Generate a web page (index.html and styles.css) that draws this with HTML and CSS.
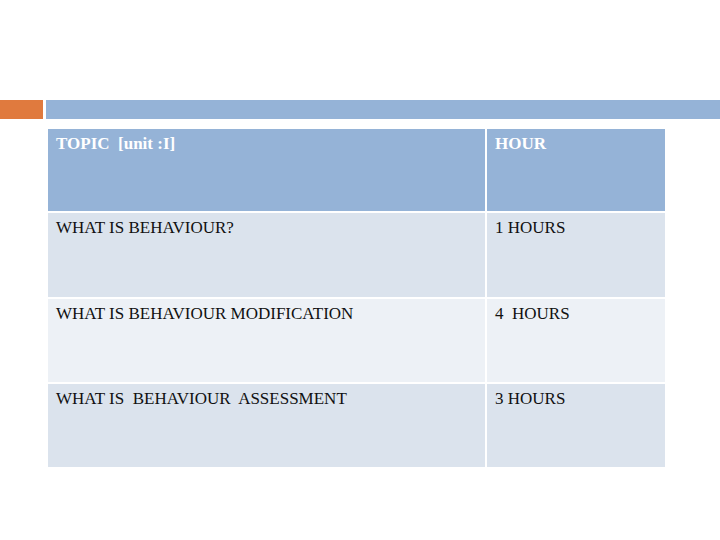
FILE: index.html
```html
<!DOCTYPE html>
<html>
<head>
<meta charset="utf-8">
<link rel="stylesheet" href="styles.css">
</head>
<body>
<div class="slide">
  <div class="bars">
    <div class="bar-orange"></div>
    <div class="bar-blue"></div>
  </div>
  <div class="table">
    <div class="cell head">TOPIC&nbsp; [unit :I]</div>
    <div class="cell head">HOUR</div>
    <div class="cell dark">WHAT IS BEHAVIOUR?</div>
    <div class="cell dark">1 HOURS</div>
    <div class="cell light">WHAT IS BEHAVIOUR MODIFICATION</div>
    <div class="cell light">4&nbsp; HOURS</div>
    <div class="cell dark">WHAT IS&nbsp; BEHAVIOUR&nbsp; ASSESSMENT</div>
    <div class="cell dark">3 HOURS</div>
  </div>
</div>
</body>
</html>
```
FILE: styles.css
```css
html, body {
  margin: 0;
  padding: 0;
  background: #ffffff;
}
.slide {
  width: 720px;
  height: 540px;
  padding-top: 100px;
  box-sizing: border-box;
}
.bars {
  display: flex;
  gap: 3px;
  height: 19px;
}
.bar-orange {
  width: 43px;
  background: #e07a3e;
}
.bar-blue {
  flex: 1;
  background: #95b3d7;
}
.table {
  margin: 10px 0 0 48px;
  width: 617px;
  display: grid;
  grid-template-columns: 437px 178px;
  grid-template-rows: 82px 84px 83px 83px;
  gap: 2px;
}
.cell {
  font-family: "Liberation Serif", "DejaVu Serif", serif;
  font-size: 17px;
  color: #111111;
  padding: 5px 0 0 8px;
  line-height: 19px;
}
.head {
  background: #95b3d7;
  color: #ffffff;
  font-weight: bold;
}
.dark {
  background: #dbe3ed;
}
.light {
  background: #edf1f6;
}
```
